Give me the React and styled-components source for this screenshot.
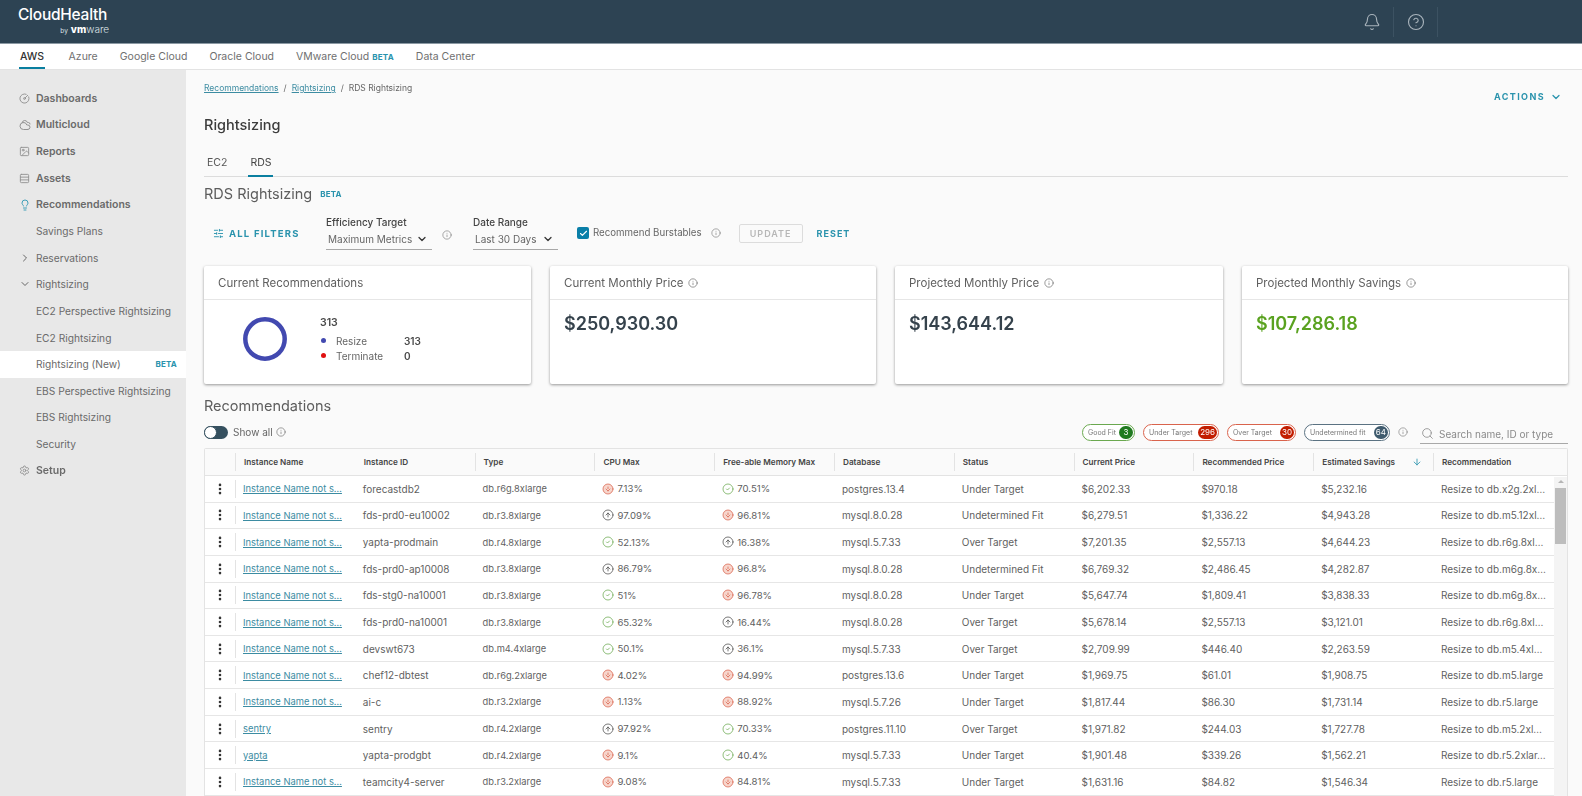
import React from "react";
import styled, { createGlobalStyle } from "styled-components";
import {
  Bell, CircleHelp, Info, CircleGauge, Cloudy, Image, Rows3, Lightbulb, Settings, ChevronRight, ChevronDown,
  SlidersHorizontal, Check, EllipsisVertical, ArrowDown, Search, CircleArrowDown, CircleArrowUp, CircleCheck,
} from "lucide-react";

const Global = createGlobalStyle`
  html, body { margin: 0; padding: 0; background: #fafafa; }
  body { font-family: Inter, "Open Sans", "Liberation Sans", sans-serif; color: #565656; overflow: hidden; }
  * { box-sizing: border-box; }
`;

const Page = styled.div`
  width: 1582px; height: 796px; display: flex; flex-direction: column; overflow: hidden;
  filter: blur(0.4px);
`;
const Header = styled.header`
  height: 44px; flex: none; background: #2d4353; border-bottom: 1px solid #8b99a3;
  display: flex; align-items: center; justify-content: space-between; padding: 0 144px 0 18px;
`;
const Logo = styled.div`display: flex; flex-direction: column; align-items: flex-end; color: #fff;`;
const LogoName = styled.div`font-size: 15.5px; line-height: 18px; font-weight: 500; letter-spacing: -0.25px;`;
const LogoBy = styled.div`
  font-size: 10px; line-height: 11px; margin-right: -2px; color: #dfe4e8; font-weight: 300;
  small { font-size: 6.5px; margin-right: 3px; font-weight: 400; }
  b { font-weight: 800; color: #fff; }
`;
const HeaderIcons = styled.div`display: flex; align-items: center; height: 30px; color: #a9b4bc;`;
const HeaderIconCell = styled.div`
  width: 44px; height: 30px; display: flex; align-items: center; justify-content: center;
  border-right: 1px solid #3c5262;
`;
const CloudTabs = styled.nav`
  height: 26px; flex: none; background: #fff; border-bottom: 1px solid #e3e3e3;
  display: flex; gap: 20px; padding-left: 19px; font-size: 10.5px; color: #6f6f6f;
`;
const CloudTab = styled.div`
  height: 25px; display: flex; align-items: center; padding: 0 1px; gap: 3px;
  ${(p) => p.$active && "color:#333;font-weight:500;box-shadow: inset 0 -2px 0 #0a7fa0;margin-right:2.5px;"}
`;
const Beta = styled.span`font-size: 8px; font-weight: 700; color: #2a93ad; letter-spacing: 0.2px;`;
const Body = styled.div`flex: 1; display: flex; min-height: 0;`;
const Sidebar = styled.aside`
  width: 186px; flex: none; background: #e8e8e8; padding-top: 15px; color: #6a6a6a;
`;
const NavRow = styled.div`
  height: 26.6px; display: flex; align-items: center;
  padding-left: ${(p) => (p.$main ? 19 : 36)}px; padding-right: 9px;
  font-size: ${(p) => (p.$main ? 10.5 : 10.2)}px;
  font-weight: ${(p) => (p.$main ? 600 : 400)};
  ${(p) => p.$current && "background:#fff;"}
  white-space: nowrap;
`;
const NavIcon = styled.span`width: 17px; display: flex; flex: none; color: ${(p) => p.$c || "#929292"};`;
const NavCaret = styled.span`width: 17px; margin-left: -17px; display: flex; color: #666;`;
const Grow = styled.span`flex: 1;`;
const Main = styled.main`flex: 1; min-width: 0; padding: 0 14px 0 18px;`;
const TopLine = styled.div`height: 36px; display: flex; align-items: center; justify-content: space-between; padding-top: 1px;`;
const Crumbs = styled.div`font-size: 8.5px; display: flex; gap: 5px; color: #666; margin-top: -1px;`;
const CrumbLink = styled.a`color: #3c8ca2; text-decoration: underline;`;
const Actions = styled.div`
  display: flex; align-items: center; gap: 5px; color: #2a93ad; font-size: 9px; font-weight: 700;
  letter-spacing: 1.4px; padding-right: 6px; margin-top: 16px;
`;
const PageTitle = styled.h1`margin: 10px 0 0; font-size: 14.5px; line-height: 18px; font-weight: 500; color: #3c3c3c;`;
const Tabs = styled.div`margin-top: 21px; height: 22px; display: flex; gap: 19px; border-bottom: 1px solid #dcdcdc; font-size: 10.5px; padding-left: 2px;`;
const TabItem = styled.div`
  height: 22px; padding: 1px 2px 0; display: flex; align-items: flex-start; margin-left: -1px;
  ${(p) => p.$active && "box-shadow: inset 0 -2px 0 #0a7fa0;color:#444;margin-left:0;"}
`;
const SectionTitle = styled.h2`
  margin: 7px 0 0; font-size: 14.5px; line-height: 20px; font-weight: 400; color: #5d5d5d;
  display: flex; align-items: center; gap: 8px;
`;
const Filters = styled.div`height: 40px; margin-top: 11px; display: flex; align-items: flex-start; font-size: 10px;`;
const AllFilters = styled.div`
  display: flex; align-items: center; gap: 5px; margin: 13px 0 0 9px; width: 113px;
  color: #2a93ad; font-size: 9.5px; font-weight: 700; letter-spacing: 1.2px;
`;
const Field = styled.div`width: ${(p) => p.$w}px; display: flex; flex-direction: column; flex: none;`;
const FieldLabel = styled.div`font-size: 10px; font-weight: 500; color: #444; line-height: 14px;`;
const SelectBox = styled.div`
  height: 21px; padding: 0 4px 0 2px; border-bottom: 1.5px solid #a8a8a8; color: #666; font-size: 10px;
  display: flex; align-items: center; justify-content: space-between;
`;
const InfoSlot = styled.span`display: flex; color: #777; margin: ${(p) => p.$m || "0"};`;
const CheckBox = styled.span`
  width: 12px; height: 12px; border-radius: 2px; background: #0a7fa8; color: #fff;
  display: flex; align-items: center; justify-content: center; margin: 12px 4px 0 19px;
`;
const CheckLabel = styled.span`margin-top: 12px; line-height: 12px; font-size: 9.7px; color: #666;`;
const GhostBtn = styled.div`
  width: 64px; height: 19px; margin: 9px 0 0 18px; border: 1px solid #dcdcdc; border-radius: 2px; background: #fafafa;
  color: #b7b7b7; font-size: 9px; font-weight: 600; letter-spacing: 1px;
  display: flex; align-items: center; justify-content: center;
`;
const ResetBtn = styled.div`margin: 13px 0 0 14px; color: #2a93ad; font-size: 9px; font-weight: 700; letter-spacing: 1px; line-height: 11px;`;
const Cards = styled.div`margin-top: 11px; display: grid; grid-template-columns: 327px 326px 328px 326px; gap: 19px; height: 118px;`;
const Card = styled.section`
  background: #fff; border-radius: 2px; box-shadow: 0 1px 3px rgba(0,0,0,.4);
  display: flex; flex-direction: column;
`;
const CardHead = styled.div`
  height: 34px; flex: none; border-bottom: 1px solid #e6e6e6; padding: 0 14px;
  display: flex; align-items: center; gap: 5px; font-size: 11.5px; color: #5f5f5f;
`;
const CardValue = styled.div`
  padding: 14px 14px 0; font-size: 18px; line-height: 20px; font-weight: 600;
  color: ${(p) => p.$c || "#35424c"};
`;
const DonutBody = styled.div`display: flex; padding: 17px 0 0 39px;`;
const Legend = styled.div`margin: -1px 0 0 33px; font-size: 10px; display: flex; flex-direction: column; color: #666;`;
const LegendTotal = styled.div`font-weight: 600; font-size: 10.5px; line-height: 14px; color: #4a4a4a; margin-bottom: 3px;`;
const LegendRow = styled.div`height: 15px; display: flex; align-items: center;`;
const Dot = styled.span`width: 5px; height: 5px; border-radius: 50%; background: ${(p) => p.$c}; margin: 0 10px 0 1px;`;
const LegendName = styled.span`width: 68px;`;
const LegendNum = styled.span`font-weight: 600; color: #4a4a4a;`;
const RecTitle = styled.h2`margin: 12px 0 0; font-size: 14.5px; line-height: 20px; font-weight: 400; color: #5d5d5d;`;
const TableBar = styled.div`height: 24px; margin-top: 4px; display: flex; align-items: center;`;
const ToggleWrap = styled.span`
  width: 24px; height: 13px; border-radius: 7px; background: #35505f; position: relative; margin-right: 5px; flex: none;
`;
const ToggleKnob = styled.span`
  position: absolute; left: 0; top: 0; width: 13px; height: 13px; border-radius: 50%;
  background: #fff; border: 1px solid #35505f;
`;
const ShowAll = styled.span`font-size: 10px; color: #666; display: flex; align-items: center; gap: 3px;`;
const Pills = styled.div`display: flex; align-items: center; gap: 8px; margin-left: auto;`;
const Pill = styled.span`
  height: 17px; border: 1px solid ${(p) => p.$c}; border-radius: 9px; padding: 0 1px 0 5px; font-size: 7px; color: #777;
  display: flex; align-items: center; justify-content: space-between; width: ${(p) => p.$w}px; white-space: nowrap; background: #fff;
`;
const PillCount = styled.span`
  min-width: 14px; height: 13px; padding: 0 2px; border-radius: 7px; background: ${(p) => p.$c}; color: #fff; font-size: 8px;
  display: flex; align-items: center; justify-content: center;
`;
const SearchBox = styled.div`
  width: 148px; height: 20px; margin-left: 8px; border-bottom: 1.5px solid #a8a8a8; color: #8a8a8a; font-size: 10px;
  display: flex; align-items: center; gap: 5px; padding-left: 1px; margin-top: 4px;
`;
const Table = styled.div`margin-top: 4px; border: 1px solid #e3e3e3; border-bottom: 0; background: #fff; border-radius: 2px 2px 0 0; position: relative;`;
const Cols = "30px repeat(10, 119.8px) 1fr";
const HeadRow = styled.div`
  height: 27px; display: grid; grid-template-columns: ${Cols}; align-items: center; background: #fafafa;
  border-bottom: 1px solid #e3e3e3; font-size: 8.2px; font-weight: 600; color: #444;
`;
const HeadCell = styled.div`
  height: 18px; display: flex; align-items: center; justify-content: space-between;
  padding: 0 11px 0 8px; border-left: 1px solid ${(p) => (p.$first ? "transparent" : "#e3e3e3")};
  white-space: nowrap;
`;
const DataRow = styled.div`
  height: 26.65px; display: grid; grid-template-columns: ${Cols}; align-items: center;
  border-bottom: 1px solid #e6e6e6; font-size: 10px; color: #5f5f5f; margin-right: 13px;
`;
const Cell = styled.div`
  padding-left: 8px; white-space: nowrap; display: flex; align-items: center; gap: 3px;
  ${(p) => p.$s && `font-size: ${p.$s}px;`}
`;
const Kebab = styled.div`height: 18px; display: flex; align-items: center; justify-content: center; color: #333; border-right: 1px solid #e3e3e3; margin-right: -1px;`;
const RowLink = styled.a`color: #3c8ca2; text-decoration: underline;`;
const Scrollbar = styled.div`
  position: absolute; right: 0; top: 28px; bottom: 0; width: 13px; background: #f4f4f4; padding: 0 1px;
  &::before { content: ""; display: block; margin: 3px auto 0; width: 0; height: 0; border: 3px solid transparent; border-bottom-color: #b5b5b5; border-top: 0; }
`;
const ScrollThumb = styled.div`height: 56px; margin-top: 5px; background: #bdbdbd;`;

const statusIcon = {
  d: <CircleArrowDown size={12} color="#d9634c" fill="#f7d6cd" strokeWidth={1.5} />,
  u: <CircleArrowUp size={12} color="#4b4b4b" strokeWidth={1.5} />,
  c: <CircleCheck size={12} color="#6aa84f" strokeWidth={1.5} />,
};

const N = "Instance Name not s…";
const rows = [
  [N, "forecastdb2", "db.r6g.8xlarge", "d", "7.13%", "c", "70.51%", "postgres.13.4", "Under Target", "$6,202.33", "$970.18", "$5,232.16", "Resize to db.x2g.2xl…"],
  [N, "fds-prd0-eu10002", "db.r3.8xlarge", "u", "97.09%", "d", "96.81%", "mysql.8.0.28", "Undetermined Fit", "$6,279.51", "$1,336.22", "$4,943.28", "Resize to db.m5.12xl…"],
  [N, "yapta-prodmain", "db.r4.8xlarge", "c", "52.13%", "u", "16.38%", "mysql.5.7.33", "Over Target", "$7,201.35", "$2,557.13", "$4,644.23", "Resize to db.r6g.8xl…"],
  [N, "fds-prd0-ap10008", "db.r3.8xlarge", "u", "86.79%", "d", "96.8%", "mysql.8.0.28", "Undetermined Fit", "$6,769.32", "$2,486.45", "$4,282.87", "Resize to db.m6g.8x…"],
  [N, "fds-stg0-na10001", "db.r3.8xlarge", "c", "51%", "d", "96.78%", "mysql.8.0.28", "Under Target", "$5,647.74", "$1,809.41", "$3,838.33", "Resize to db.m6g.8x…"],
  [N, "fds-prd0-na10001", "db.r3.8xlarge", "c", "65.32%", "u", "16.44%", "mysql.8.0.28", "Over Target", "$5,678.14", "$2,557.13", "$3,121.01", "Resize to db.r6g.8xl…"],
  [N, "devswt673", "db.m4.4xlarge", "c", "50.1%", "u", "36.1%", "mysql.5.7.33", "Over Target", "$2,709.99", "$446.40", "$2,263.59", "Resize to db.m5.4xl…"],
  [N, "chef12-dbtest", "db.r6g.2xlarge", "d", "4.02%", "d", "94.99%", "postgres.13.6", "Under Target", "$1,969.75", "$61.01", "$1,908.75", "Resize to db.m5.large"],
  [N, "ai-c", "db.r3.2xlarge", "d", "1.13%", "d", "88.92%", "mysql.5.7.26", "Under Target", "$1,817.44", "$86.30", "$1,731.14", "Resize to db.r5.large"],
  ["sentry", "sentry", "db.r4.2xlarge", "u", "97.92%", "c", "70.33%", "postgres.11.10", "Over Target", "$1,971.82", "$244.03", "$1,727.78", "Resize to db.m5.2xl…"],
  ["yapta", "yapta-prodgbt", "db.r4.2xlarge", "d", "9.1%", "c", "40.4%", "mysql.5.7.33", "Under Target", "$1,901.48", "$339.26", "$1,562.21", "Resize to db.r5.2xlar…"],
  [N, "teamcity4-server", "db.r3.2xlarge", "d", "9.08%", "d", "84.81%", "mysql.5.7.33", "Under Target", "$1,631.16", "$84.82", "$1,546.34", "Resize to db.r5.large"],
];
const heads = ["Instance Name", "Instance ID", "Type", "CPU Max", "Free-able Memory Max", "Database", "Status", "Current Price", "Recommended Price", "Estimated Savings", "Recommendation"];
const I = ({ s = 10 }) => <Info size={s} strokeWidth={1.5} />;

export default function App() {
  return (
    <Page>
      <Global />
      <Header>
        <Logo>
          <LogoName>CloudHealth</LogoName>
          <LogoBy><small>by</small><b>vm</b>ware</LogoBy>
        </Logo>
        <HeaderIcons>
          <HeaderIconCell><Bell size={18} strokeWidth={1.5} /></HeaderIconCell>
          <HeaderIconCell><CircleHelp size={18} strokeWidth={1.5} /></HeaderIconCell>
        </HeaderIcons>
      </Header>
      <CloudTabs>
        <CloudTab $active>AWS</CloudTab>
        <CloudTab>Azure</CloudTab>
        <CloudTab>Google Cloud</CloudTab>
        <CloudTab>Oracle Cloud</CloudTab>
        <CloudTab>VMware Cloud <Beta>BETA</Beta></CloudTab>
        <CloudTab>Data Center</CloudTab>
      </CloudTabs>
      <Body>
        <Sidebar>
          <NavRow $main><NavIcon><CircleGauge size={11} /></NavIcon>Dashboards</NavRow>
          <NavRow $main><NavIcon><Cloudy size={12} /></NavIcon>Multicloud</NavRow>
          <NavRow $main><NavIcon><Image size={11} /></NavIcon>Reports</NavRow>
          <NavRow $main><NavIcon><Rows3 size={11} /></NavIcon>Assets</NavRow>
          <NavRow $main><NavIcon $c="#3f9fb8"><Lightbulb size={12} /></NavIcon>Recommendations</NavRow>
          <NavRow>Savings Plans</NavRow>
          <NavRow><NavCaret><ChevronRight size={12} /></NavCaret>Reservations</NavRow>
          <NavRow><NavCaret><ChevronDown size={12} /></NavCaret>Rightsizing</NavRow>
          <NavRow>EC2 Perspective Rightsizing</NavRow>
          <NavRow>EC2 Rightsizing</NavRow>
          <NavRow $current>Rightsizing (New)<Grow /><Beta>BETA</Beta></NavRow>
          <NavRow>EBS Perspective Rightsizing</NavRow>
          <NavRow>EBS Rightsizing</NavRow>
          <NavRow>Security</NavRow>
          <NavRow $main><NavIcon><Settings size={11} /></NavIcon>Setup</NavRow>
        </Sidebar>
        <Main>
          <TopLine>
            <Crumbs><CrumbLink>Recommendations</CrumbLink>/<CrumbLink>Rightsizing</CrumbLink>/<span>RDS Rightsizing</span></Crumbs>
            <Actions>ACTIONS <ChevronDown size={12} strokeWidth={2.5} /></Actions>
          </TopLine>
          <PageTitle>Rightsizing</PageTitle>
          <Tabs>
            <TabItem>EC2</TabItem>
            <TabItem $active>RDS</TabItem>
          </Tabs>
          <SectionTitle>RDS Rightsizing <Beta>BETA</Beta></SectionTitle>
          <Filters>
            <AllFilters><SlidersHorizontal size={11} />ALL FILTERS</AllFilters>
            <Field $w={106}>
              <FieldLabel>Efficiency Target</FieldLabel>
              <SelectBox>Maximum Metrics <ChevronDown size={12} strokeWidth={2.5} color="#333" /></SelectBox>
            </Field>
            <InfoSlot $m="15px 21px 0 10px"><I /></InfoSlot>
            <Field $w={85}>
              <FieldLabel>Date Range</FieldLabel>
              <SelectBox>Last 30 Days <ChevronDown size={12} strokeWidth={2.5} color="#333" /></SelectBox>
            </Field>
            <CheckBox><Check size={9} strokeWidth={3} /></CheckBox>
            <CheckLabel>Recommend Burstables</CheckLabel>
            <InfoSlot $m="13px 0 0 9px"><I /></InfoSlot>
            <GhostBtn>UPDATE</GhostBtn>
            <ResetBtn>RESET</ResetBtn>
          </Filters>
          <Cards>
            <Card>
              <CardHead>Current Recommendations</CardHead>
              <DonutBody>
                <svg width="44" height="44" viewBox="0 0 44 44"><circle cx="22" cy="22" r="19.7" fill="none" stroke="#4249b0" strokeWidth="4.5" /></svg>
                <Legend>
                  <LegendTotal>313</LegendTotal>
                  <LegendRow><Dot $c="#4249b0" /><LegendName>Resize</LegendName><LegendNum>313</LegendNum></LegendRow>
                  <LegendRow><Dot $c="#e01010" /><LegendName>Terminate</LegendName><LegendNum>0</LegendNum></LegendRow>
                </Legend>
              </DonutBody>
            </Card>
            <Card>
              <CardHead>Current Monthly Price <I /></CardHead>
              <CardValue>$250,930.30</CardValue>
            </Card>
            <Card>
              <CardHead>Projected Monthly Price <I /></CardHead>
              <CardValue>$143,644.12</CardValue>
            </Card>
            <Card>
              <CardHead>Projected Monthly Savings <I /></CardHead>
              <CardValue $c="#5aa220">$107,286.18</CardValue>
            </Card>
          </Cards>
          <RecTitle>Recommendations</RecTitle>
          <TableBar>
            <ToggleWrap><ToggleKnob /></ToggleWrap>
            <ShowAll>Show all <I /></ShowAll>
            <Pills>
              <Pill $c="#6aa84f" $w={53}>Good Fit<PillCount $c="#1f7a1f">3</PillCount></Pill>
              <Pill $c="#d9634c" $w={76}>Under Target<PillCount $c="#c21d00">296</PillCount></Pill>
              <Pill $c="#d9634c" $w={69}>Over Target<PillCount $c="#c21d00">30</PillCount></Pill>
              <Pill $c="#5b7282" $w={86}>Undetermined fit<PillCount $c="#3f5b6e">64</PillCount></Pill>
              <InfoSlot $m="0 4px 0 0"><I /></InfoSlot>
            </Pills>
            <SearchBox><Search size={13} strokeWidth={1.5} />Search name, ID or type</SearchBox>
          </TableBar>
          <Table>
            <HeadRow>
              <span />
              {heads.map((h, i) => (
                <HeadCell key={h} $first={i === 1}>
                  {h}
                  {h === "Estimated Savings" && <ArrowDown size={10} color="#2a93ad" />}
                </HeadCell>
              ))}
            </HeadRow>
            {rows.map((r) => (
              <DataRow key={r[1]}>
                <Kebab><EllipsisVertical size={14} strokeWidth={2.5} /></Kebab>
                <Cell $s={9.4}><RowLink>{r[0]}</RowLink></Cell>
                <Cell>{r[1]}</Cell>
                <Cell $s={9.3}>{r[2]}</Cell>
                <Cell $s={9.6}>{statusIcon[r[3]]}{r[4]}</Cell>
                <Cell $s={9.6}>{statusIcon[r[5]]}{r[6]}</Cell>
                {r.slice(7).map((v, i) => <Cell key={i}>{v}</Cell>)}
              </DataRow>
            ))}
            <Scrollbar><ScrollThumb /></Scrollbar>
          </Table>
        </Main>
      </Body>
    </Page>
  );
}
